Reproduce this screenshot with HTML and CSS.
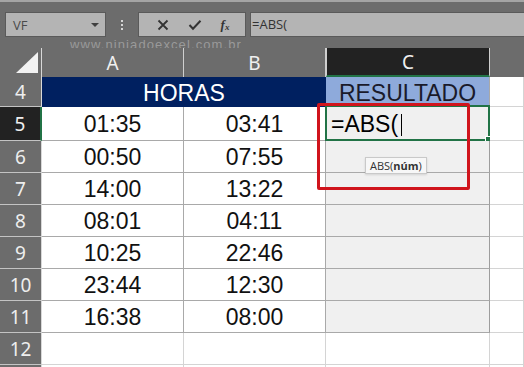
FILE: index.html
```html
<!DOCTYPE html>
<html>
<head>
    <meta charset="utf-8">
    <title>ABS - Excel</title>
    <link rel="stylesheet" href="styles.css">
</head>
<body>
    <div id="excel">
        <div class="toolbar">
            <div class="namebox">
                <span>VF</span>
                <span class="caret"></span>
            </div>
            <div class="dots">
                <i></i><i></i><i></i>
            </div>
            <div class="buttons">
                <svg width="12" height="12" viewBox="0 0 12 12"><path d="M1.5 1.5 L10.5 10.5 M10.5 1.5 L1.5 10.5" stroke="#333" stroke-width="1.8" fill="none"/></svg>
                <svg width="14" height="12" viewBox="0 0 14 12"><path d="M1.5 6 L5 9.8 L12.5 1.8" stroke="#333" stroke-width="2" fill="none"/></svg>
                <span class="fx">f<sub>x</sub></span>
            </div>
            <div class="formula">=ABS(</div>
            <div class="watermark">www.ninjadoexcel.com.br</div>
        </div>

        <div class="sheet">
            <!-- cabeçalho das colunas -->
            <div class="colhead corner"><span class="tri"></span></div>
            <div class="colhead">A</div>
            <div class="colhead">B</div>
            <div class="colhead active">C</div>
            <div class="colhead last"></div>

            <div class="rowhead">4</div>
            <div class="cell title span2">HORAS</div>
            <div class="cell result">RESULTADO</div>
            <div class="cell empty"></div>

            <div class="rowhead active">5</div>
            <div class="cell">01:35</div>
            <div class="cell">03:41</div>
            <div class="cell shade editing">
                <span>=ABS(</span><span class="cursor"></span>
                <div class="selection"><span class="handle"></span></div>
                <div class="tip">ABS(<b>núm</b>)</div>
            </div>
            <div class="cell empty"></div>

            <div class="rowhead">6</div>
            <div class="cell">00:50</div>
            <div class="cell">07:55</div>
            <div class="cell shade"></div>
            <div class="cell empty"></div>

            <div class="rowhead">7</div>
            <div class="cell">14:00</div>
            <div class="cell">13:22</div>
            <div class="cell shade"></div>
            <div class="cell empty"></div>

            <div class="rowhead">8</div>
            <div class="cell">08:01</div>
            <div class="cell">04:11</div>
            <div class="cell shade"></div>
            <div class="cell empty"></div>

            <div class="rowhead">9</div>
            <div class="cell">10:25</div>
            <div class="cell">22:46</div>
            <div class="cell shade"></div>
            <div class="cell empty"></div>

            <div class="rowhead">10</div>
            <div class="cell">23:44</div>
            <div class="cell">12:30</div>
            <div class="cell shade"></div>
            <div class="cell empty"></div>

            <div class="rowhead">11</div>
            <div class="cell">16:38</div>
            <div class="cell">08:00</div>
            <div class="cell shade"></div>
            <div class="cell empty"></div>

            <div class="rowhead">12</div>
            <div class="cell empty"></div>
            <div class="cell empty"></div>
            <div class="cell empty"></div>
            <div class="cell empty"></div>

            <div class="rowhead"></div>
            <div class="cell empty"></div>
            <div class="cell empty"></div>
            <div class="cell empty"></div>
            <div class="cell empty"></div>

            <div class="mark"></div>
        </div>
    </div>
</body>
</html>
```

FILE: styles.css
```css
body {
    margin: 0;
    background: #ffffff;
    font-family: "Liberation Sans", Arial, sans-serif;
}
#excel {
    width: 524px;
    height: 367px;
    overflow: hidden;
}

/* barra de fórmulas */
.toolbar {
    position: relative;
    height: 48px;
    background: #6c6c6c;
    border-top: 2px solid #a4a4a4;
    display: flex;
    align-items: flex-start;
    padding-top: 10px;
    box-sizing: border-box;
}
.namebox {
    margin-left: 5px;
    width: 101px;
    height: 25px;
    box-sizing: border-box;
    background: #b4b4b4;
    border: 1px solid #5a5a5a;
    display: flex;
    align-items: center;
    justify-content: space-between;
    padding: 0 6px 0 7px;
    font-family: "Open Sans", sans-serif;
    font-size: 13px;
    color: #4a4a4a;
}
.caret {
    width: 0;
    height: 0;
    border-left: 4px solid transparent;
    border-right: 4px solid transparent;
    border-top: 4px solid #3f3f3f;
}
.dots {
    width: 32px;
    height: 25px;
    display: flex;
    flex-direction: column;
    align-items: center;
    justify-content: center;
    gap: 2px;
}
.dots i {
    width: 2px;
    height: 2px;
    background: #d6d6d6;
}
.buttons {
    width: 108px;
    height: 25px;
    box-sizing: border-box;
    background: #b4b4b4;
    border: 1px solid #5a5a5a;
    display: flex;
    align-items: center;
    justify-content: space-around;
    padding: 0 6px 0 8px;
}
.fx {
    font-family: "Liberation Serif", serif;
    font-style: italic;
    font-weight: bold;
    font-size: 13px;
    color: #333;
}
.fx sub {
    font-size: 9px;
    vertical-align: -1px;
}
.formula {
    flex: 1;
    margin-left: 4px;
    height: 25px;
    box-sizing: border-box;
    background: #b4b4b4;
    border: 1px solid #5a5a5a;
    border-right: none;
    font-family: "Open Sans", sans-serif;
    font-size: 13px;
    color: #333;
    line-height: 23px;
    padding-left: 1px;
}
.watermark {
    position: absolute;
    left: 70px;
    top: 35px;
    font-family: "Liberation Sans", sans-serif;
    font-size: 13px;
    letter-spacing: 1.1px;
    color: rgba(200, 200, 200, 0.5);
}

/* planilha */
.sheet {
    position: relative;
    display: grid;
    grid-template-columns: 42px 142px 142px 164px 1fr;
    grid-template-rows: 29px 30px 34px repeat(7, 32px) 20px;
}
.colhead {
    background: #6c6c6c;
    color: #f0f0f0;
    font-family: "Noto Sans", sans-serif;
    font-size: 19px;
    display: flex;
    align-items: center;
    justify-content: center;
    border-right: 1px solid #cfcfcf;
    box-sizing: border-box;
}
.colhead.corner {
    border-right: 1px solid #d8d8d8;
    justify-content: flex-end;
    align-items: flex-end;
    padding: 0 3px 4px 0;
}
.tri {
    width: 0;
    height: 0;
    border-left: 22px solid transparent;
    border-bottom: 21px solid #f2f2f2;
}
.colhead.active {
    background: #222222;
    border-left: 1px solid #cfcfcf;
    border-bottom: 2px solid #217346;
}
.colhead.last {
    border-right: none;
}
.rowhead {
    background: #6c6c6c;
    color: #eeeeee;
    font-family: "Noto Sans", sans-serif;
    font-size: 19px;
    display: flex;
    align-items: center;
    justify-content: center;
    border-bottom: 1px solid #c4c4c4;
    border-right: 1px solid #d8d8d8;
    box-sizing: border-box;
    padding-top: 1px;
}
.rowhead.active {
    background: #222222;
    border-right: 2px solid #217346;
}
.cell {
    position: relative;
    box-sizing: border-box;
    border-right: 1px solid #a9a9a9;
    border-bottom: 1px solid #a9a9a9;
    background: #ffffff;
    color: #111;
    font-size: 23px;
    display: flex;
    align-items: center;
    justify-content: center;
    padding-top: 2px;
}
.cell.span2 {
    grid-column: span 2;
}
.cell.title {
    background: #002060;
    color: #ffffff;
    border-right: none;
    border-bottom: none;
}
.cell.result {
    background: #8eaadb;
    color: #1a1a2a;
    border-bottom: none;
}
.cell.shade {
    background: #f0f0f0;
    border-right: 1px solid #9d9d9d;
}
.cell.empty {
    border-right: 1px solid #d4d4d4;
    border-bottom: 1px solid #d4d4d4;
}
.cell.editing {
    justify-content: flex-start;
    padding-left: 5px;
    color: #000;
}
.cursor {
    width: 1px;
    height: 22px;
    background: #000;
    margin-left: 3px;
}
.selection {
    position: absolute;
    left: -1px;
    top: -2px;
    right: -1px;
    bottom: -1px;
    border: 2px solid #217346;
}
.handle {
    position: absolute;
    right: -4px;
    bottom: -4px;
    width: 5px;
    height: 5px;
    background: #217346;
    border: 1px solid #ffffff;
}
.tip {
    position: absolute;
    left: 39px;
    top: 50px;
    z-index: 2;
    background: #f7f7f7;
    border: 1px solid #c9c9c9;
    box-shadow: 0 1px 2px rgba(0, 0, 0, 0.12);
    font-family: "Open Sans", sans-serif;
    font-size: 11px;
    color: #333;
    padding: 1px 4px 1px 4px;
    white-space: nowrap;
    line-height: 13px;
}
.mark {
    position: absolute;
    left: 317px;
    top: 55px;
    width: 153px;
    height: 87px;
    box-sizing: border-box;
    border: 3px solid #d0141c;
    border-radius: 2px;
    z-index: 3;
}
```
